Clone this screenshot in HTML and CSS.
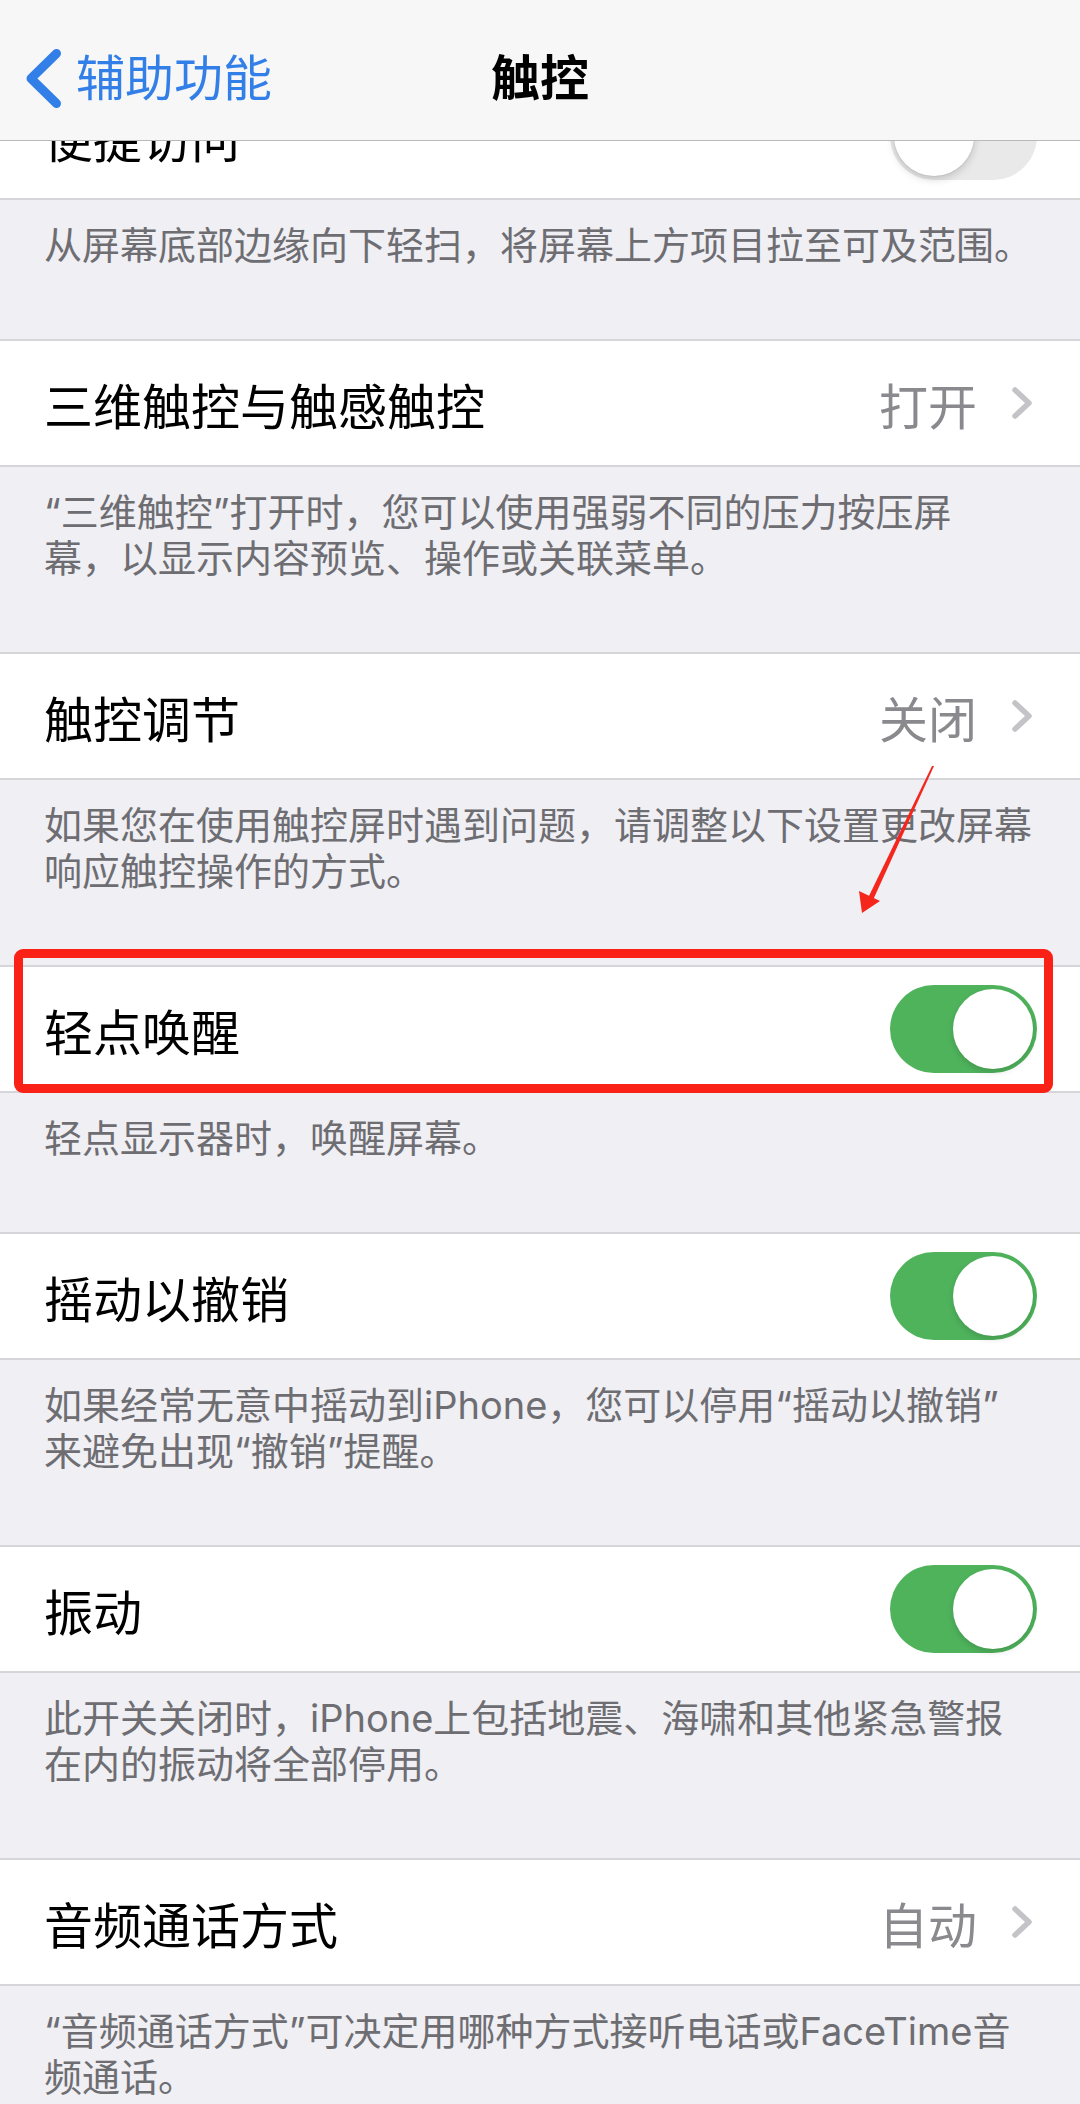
FILE: index.html
```html
<!DOCTYPE html>
<html lang="zh-CN">
<head>
	<meta charset="utf-8">
	<title>触控</title>
	<link rel="stylesheet" href="styles.css">
</head>
<body>
	<div class="nav">
		<a class="back" href="#">
			<svg viewBox="0 0 44 67"><path d="M34.5 8.5 L9 33.5 L34.5 58.5"/></svg>
			<span>辅助功能</span>
		</a>
		<div class="title">触控</div>
		<div></div>
	</div>

	<div class="list">
		<div class="group">
			<div class="row">
				<span>便捷访问</span>
				<span class="switch off"></span>
			</div>
		</div>
		<div class="note">从屏幕底部边缘向下轻扫，将屏幕上方项目拉至可及范围。</div>

		<div class="group">
			<div class="row">
				<span>三维触控与触感触控</span>
				<span class="value">打开<svg class="chev" viewBox="0 0 26 40"><path d="M6 7 L20 20 L6 33"/></svg></span>
			</div>
		</div>
		<div class="note">“三维触控”打开时，您可以使用强弱不同的压力按压屏<br>幕，以显示内容预览、操作或关联菜单。</div>

		<div class="group">
			<div class="row">
				<span>触控调节</span>
				<span class="value">关闭<svg class="chev" viewBox="0 0 26 40"><path d="M6 7 L20 20 L6 33"/></svg></span>
			</div>
		</div>
		<div class="note">如果您在使用触控屏时遇到问题，请调整以下设置更改屏幕<br>响应触控操作的方式。</div>

		<div class="group">
			<div class="row">
				<span>轻点唤醒</span>
				<span class="switch"></span>
			</div>
			<!-- red highlight + arrow drawn on top -->
			<div class="mark"></div>
			<svg class="arrow" viewBox="0 0 100 160">
				<polygon points="84,6 82,6 18,138 23,140"/>
				<polygon points="12,153 9,131 30,141"/>
			</svg>
		</div>
		<div class="note">轻点显示器时，唤醒屏幕。</div>

		<div class="group">
			<div class="row">
				<span>摇动以撤销</span>
				<span class="switch"></span>
			</div>
		</div>
		<div class="note">如果经常无意中摇动到iPhone，您可以停用“摇动以撤销”<br>来避免出现“撤销”提醒。</div>

		<div class="group">
			<div class="row">
				<span>振动</span>
				<span class="switch"></span>
			</div>
		</div>
		<div class="note">此开关关闭时，iPhone上包括地震、海啸和其他紧急警报<br>在内的振动将全部停用。</div>

		<div class="group">
			<div class="row">
				<span>音频通话方式</span>
				<span class="value">自动<svg class="chev" viewBox="0 0 26 40"><path d="M6 7 L20 20 L6 33"/></svg></span>
			</div>
		</div>
		<div class="note">“音频通话方式”可决定用哪种方式接听电话或FaceTime音<br>频通话。</div>
	</div>
</body>
</html>
```

FILE: styles.css
```css
* {
	box-sizing: border-box;
}
html, body {
	margin: 0px;
	padding: 0px;
}
body {
	height: 2104px;
	overflow: hidden;
	background-color: #efeff4;
	font-family: Inter, "Noto Sans CJK SC", sans-serif;
	color: #000;
}

/* top bar */
.nav {
	height: 141px;
	padding: 16px 22px 0px;
	background-color: #f7f7f8;
	border-bottom: 1px solid #b9b9bc;
	display: grid;
	grid-template-columns: 1fr auto 1fr;
	align-items: center;
}
.back {
	display: flex;
	align-items: center;
	gap: 10px;
	color: #337fe8;
	font-size: 49px;
	line-height: 67px;
	text-decoration: none;
}
.back svg {
	width: 44px;
	height: 67px;
	fill: none;
	stroke: #337fe8;
	stroke-width: 9;
	stroke-linecap: round;
	stroke-linejoin: round;
}
.title {
	font-size: 49px;
	font-weight: 700;
	line-height: 67px;
}

/* settings list */
.list {
	overflow: hidden;
}
.group {
	position: relative;
	background-color: #fff;
	border-top: 2px solid #d6d6da;
	border-bottom: 2px solid #d6d6da;
}
.group:first-child {
	margin-top: -69px;
}
.row {
	height: 124px;
	padding: 0px 43px 0px 44px;
	display: flex;
	align-items: center;
	justify-content: space-between;
	font-size: 49px;
}
.value {
	display: flex;
	align-items: center;
	gap: 32px;
	margin-right: 2px;
	color: #8a8a8e;
}
.chev {
	width: 26px;
	height: 40px;
	fill: none;
	stroke: #c4c4c8;
	stroke-width: 5.5;
	stroke-linecap: round;
	stroke-linejoin: round;
}
.note {
	padding: 22px 20px 71px 44px;
	font-size: 38px;
	line-height: 46px;
	color: #6d6d72;
	white-space: nowrap;
}

/* toggle */
.switch {
	position: relative;
	width: 147px;
	height: 88px;
	border-radius: 44px;
	background-color: #4fb35c;
}
.switch::after {
	content: "";
	position: absolute;
	top: 4px;
	right: 4px;
	width: 80px;
	height: 80px;
	border-radius: 50%;
	background-color: #fff;
	box-shadow: 0px 3px 6px rgba(0, 0, 0, 0.15);
}
.switch.off {
	background-color: #e9e9ea;
}
.switch.off::after {
	right: auto;
	left: 4px;
	box-shadow: 0px 3px 8px rgba(0, 0, 0, 0.18), 0px 0px 0px 1px rgba(0, 0, 0, 0.04);
}

/* annotation */
.mark {
	position: absolute;
	top: -18px;
	bottom: -2px;
	left: 14px;
	right: 27px;
	border: 9px solid #fa2117;
	border-radius: 9px;
}
.arrow {
	position: absolute;
	top: -207px;
	left: 850px;
	width: 100px;
	height: 160px;
	fill: #f5261c;
}
```
